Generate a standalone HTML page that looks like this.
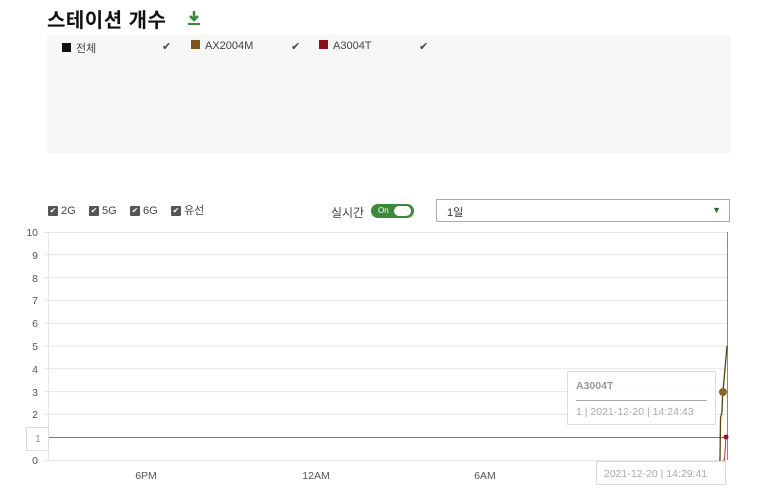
<!DOCTYPE html>
<html><head><meta charset="utf-8"><style>
body{margin:0;width:780px;height:494px;background:#fff;font-family:"Liberation Sans","Noto Sans CJK KR",sans-serif;position:relative;overflow:hidden;color:#333}
.a{position:absolute}
.cb{position:absolute;left:0;top:2px;width:10px;height:10px;background:#555;color:#fff;font-size:8px;line-height:10px;text-align:center;border-radius:1px}
.ci{position:absolute;top:0;white-space:nowrap;height:14px;line-height:14px;padding-left:13px}
</style></head><body>
<div class="a" style="left:47px;top:4px;font-size:20px;font-weight:bold;color:#111;letter-spacing:0.5px">스테이션 개수</div>
<svg class="a" style="left:187px;top:10px" width="14" height="16"><path d="M7 1v8M3 6l4 4 4-4" stroke="#3a8a3a" stroke-width="2.6" fill="none"/><rect x="1" y="13" width="12" height="2" fill="#3a8a3a"/></svg>
<div class="a" style="left:47px;top:35px;width:684px;height:118px;background:#f7f7f7"></div>
<div class="a" style="left:62px;top:40px;font-size:11px;color:#444;white-space:nowrap">
<span style="display:inline-block;width:9px;height:9px;background:#111;margin-right:5px"></span>전체
<span style="position:absolute;left:100px">✔</span>
<span style="position:absolute;left:129px;top:0"><span style="display:inline-block;width:9px;height:9px;background:#7a5418;margin-right:5px"></span>AX2004M</span>
<span style="position:absolute;left:229px">✔</span>
<span style="position:absolute;left:257px;top:0"><span style="display:inline-block;width:9px;height:9px;background:#8b0f1a;margin-right:5px"></span>A3004T</span>
<span style="position:absolute;left:357px">✔</span>
</div>
<div class="a" style="left:48px;top:204px;font-size:11px;color:#444;width:200px;height:16px">
<span class="ci" style="left:0"><span class="cb">✔</span>2G</span>
<span class="ci" style="left:41px"><span class="cb">✔</span>5G</span>
<span class="ci" style="left:82px"><span class="cb">✔</span>6G</span>
<span class="ci" style="left:123px"><span class="cb">✔</span>유선</span>
</div>
<div class="a" style="left:331px;top:204px;font-size:12px;color:#444">실시간</div>
<div class="a" style="left:371px;top:204px;width:43px;height:14px;border-radius:8px;background:#3a8a3a"><span style="position:absolute;left:7px;top:2px;font-size:8px;color:#fff">On</span><span style="position:absolute;right:3px;top:2px;width:17px;height:10px;border-radius:5px;background:#fff"></span></div>
<div class="a" style="left:436px;top:199px;width:294px;height:23px;border:1px solid #aaa;box-sizing:border-box"><span style="position:absolute;left:10px;top:4px;font-size:11px;color:#333">1일</span><span style="position:absolute;right:8px;top:5px;font-size:9px;color:#2f6b2f">▼</span></div>
<svg class="a" style="left:0;top:0" width="780" height="494" font-family="Liberation Sans, sans-serif" font-size="10.5" fill="#555">
<g stroke="#e6e6e6" stroke-width="1">
<line x1="44" y1="232.5" x2="727" y2="232.5"/><line x1="44" y1="254.8" x2="727" y2="254.8"/><line x1="44" y1="277.6" x2="727" y2="277.6"/><line x1="44" y1="300.4" x2="727" y2="300.4"/><line x1="44" y1="323.2" x2="727" y2="323.2"/><line x1="44" y1="346" x2="727" y2="346"/><line x1="44" y1="368.8" x2="727" y2="368.8"/><line x1="44" y1="391.6" x2="727" y2="391.6"/><line x1="44" y1="414.4" x2="727" y2="414.4"/><line x1="44" y1="460.5" x2="727" y2="460.5"/>
<line x1="48.5" y1="232" x2="48.5" y2="460"/>
</g>
<line x1="727.5" y1="232" x2="727.5" y2="460" stroke="#888"/>
<line x1="48" y1="437.5" x2="727" y2="437.5" stroke="#777"/>
<g text-anchor="end"><text x="38" y="236">10</text><text x="38" y="259">9</text><text x="38" y="282">8</text><text x="38" y="304">7</text><text x="38" y="327">6</text><text x="38" y="350">5</text><text x="38" y="373">4</text><text x="38" y="396">3</text><text x="38" y="418">2</text><text x="38" y="464">0</text></g>
<rect x="26.5" y="427.5" width="22" height="23" fill="#fff" stroke="#ddd"/><text x="35" y="442" fill="#999">1</text>
<g text-anchor="middle"><text x="146" y="479">6PM</text><text x="316" y="479">12AM</text><text x="485" y="479">6AM</text></g>
<polyline points="719,460 720,460 720.5,418 722,412 722.5,397 723,392 724,380 727,346" fill="none" stroke="#5a3e10" stroke-width="1.3"/>
<polyline points="723,460 724.5,460 726,437" fill="none" stroke="#c0303a" stroke-width="1"/>
<circle cx="723" cy="392" r="4" fill="#8a6420"/>
<circle cx="726" cy="437" r="2.5" fill="#a01020"/>
<rect x="567.5" y="371.5" width="148" height="53" fill="#fff" fill-opacity="0.9" stroke="#ddd"/>
<text x="576" y="389" fill="#999" font-weight="bold">A3004T</text>
<line x1="576" y1="400.5" x2="707" y2="400.5" stroke="#aaa"/>
<text x="576" y="415" fill="#aaa">1 | 2021-12-20 | 14:24:43</text>
<rect x="596.5" y="461.5" width="129" height="23" fill="#fff" stroke="#ddd"/>
<text x="604" y="477" fill="#aaa">2021-12-20 | 14:29:41</text>
</svg>
</body></html>
